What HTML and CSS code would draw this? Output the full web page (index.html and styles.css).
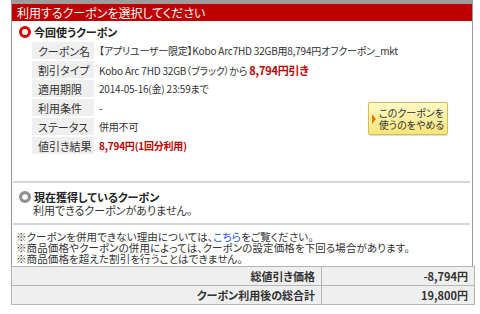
FILE: index.html
```html
<!DOCTYPE html>
<html lang="ja">
<head>
  <meta charset="UTF-8" />
  <title>クーポン選択</title>
  <link rel="stylesheet" href="styles.css">
</head>
<body>
  <div class="coupon-box">
    <div class="box-title">利用するクーポンを選択してください</div>

    <div class="section current">
      <h3 class="section-head"><span class="radio radio-on"></span>今回使うクーポン</h3>
      <div class="current-body">
        <table class="detail">
          <tr><th>クーポン名</th><td>【アプリユーザー限定】Kobo Arc7HD 32GB用8,794円オフクーポン_mkt</td></tr>
          <tr><th>割引タイプ</th><td>Kobo Arc 7HD 32GB（ブラック）から <strong class="red big">8,794円引き</strong></td></tr>
          <tr><th>適用期限</th><td>2014-05-16(金) 23:59まで</td></tr>
          <tr><th>利用条件</th><td>-</td></tr>
          <tr><th>ステータス</th><td>併用不可</td></tr>
          <tr><th>値引き結果</th><td><strong class="red">8,794円(1回分利用)</strong></td></tr>
        </table>
        <a class="btn-cancel" href="#"><span class="arrow"></span><span class="btn-text">このクーポンを<br>使うのをやめる</span></a>
      </div>
    </div>

    <div class="section other">
      <h3 class="section-head"><span class="radio radio-off"></span>現在獲得しているクーポン</h3>
      <p class="empty">利用できるクーポンがありません。</p>
    </div>

    <div class="notes">
      ※クーポンを併用できない理由については、<a href="#">こちら</a>をご覧ください。<br>
      ※商品価格やクーポンの併用によっては、クーポンの設定価格を下回る場合があります。<br>
      ※商品価格を超えた割引を行うことはできません。
    </div>

    <table class="summary">
      <tr><th>総値引き価格</th><td>-8,794円</td></tr>
      <tr><th>クーポン利用後の総合計</th><td>19,800円</td></tr>
    </table>
  </div>
</body>
</html>
```

FILE: styles.css
```css
body {
  margin: 0;
  background: #fff;
  color: #333;
  font-family: "Noto Sans CJK JP", "Liberation Sans", sans-serif;
  font-size: 11px;
  font-feature-settings: "palt";
}
.coupon-box {
  margin-left: 11px;
  width: 460px;
  border: 1px solid #999;
  border-top: 4px solid #a19b9b;
  border-bottom: none;
}
.box-title {
  background: #bf0000;
  color: #fff;
  font-size: 12px;
  height: 17px;
  line-height: 17px;
  padding-left: 5px;
}
.section {
  margin: 0 2px 0 1px;
  border-bottom: 2px solid #d6d6d6;
}
.current {
  padding-bottom: 25px;
}
.section-head {
  margin: 0;
  padding: 3px 0 0 6px;
  font-size: 11px;
  line-height: 16px;
  display: flex;
  align-items: center;
  color: #222;
}
.other .section-head {
  padding-top: 7px;
  line-height: 14px;
}
.radio {
  width: 6px;
  height: 6px;
  border-radius: 50%;
  background: #fff;
  margin-right: 3px;
}
.radio-on {
  border: 3px solid #e00000;
}
.radio-off {
  border: 3px solid #8f8f8f;
  box-shadow: inset 0 0 1px #666;
}
/* table and button share one grid cell; the button sits at the right */
.current-body {
  display: grid;
}
.detail,
.btn-cancel {
  grid-area: 1 / 1;
}
.detail {
  justify-self: start;
  margin-left: 19px;
  border-collapse: separate;
  border-spacing: 0 2px;
  font-size: 10px;
  letter-spacing: -0.2px;
}
.detail th {
  width: 56px;
  height: 17px;
  padding: 0 0 0 6px;
  background: #efefef;
  font-size: 11px;
  letter-spacing: 0;
  font-weight: normal;
  text-align: left;
  white-space: nowrap;
}
.detail td {
  padding: 0 0 0 5px;
  white-space: nowrap;
}
.red {
  color: #c00000;
}
.big {
  font-size: 11px;
}
.btn-cancel {
  justify-self: end;
  align-self: start;
  margin: 62px 22px 0 0;
  width: 78px;
  height: 31px;
  display: flex;
  align-items: center;
  background: linear-gradient(#fffbc8, #f8e57a);
  border: 1px solid #d8bb55;
  border-radius: 2px;
  box-shadow: 0 1px 1px rgba(0, 0, 0, 0.15);
  color: #333;
  text-decoration: none;
  font-size: 10px;
  line-height: 12px;
  white-space: nowrap;
}
.btn-text {
  flex: 1;
  text-align: center;
}
.arrow {
  width: 0;
  height: 0;
  border-left: 4px solid #e57a00;
  border-top: 5px solid transparent;
  border-bottom: 5px solid transparent;
  margin-left: 3px;
}
.empty {
  margin: 0;
  padding: 0 0 6px 20px;
  line-height: 13px;
}
.notes {
  padding: 6px 0 2px 4px;
  line-height: 11px;
  font-size: 10.5px;
  letter-spacing: 0.1px;
}
.notes a {
  color: #2255cc;
  text-decoration: none;
}
.summary {
  margin-left: -1px;
  width: calc(100% + 4px);
  border-collapse: collapse;
  font-weight: bold;
}
.summary th,
.summary td {
  border: 1px solid #b5b5b5;
  background: #efefef;
  height: 18px;
  padding: 0 6px 0 0;
  text-align: right;
}
.summary th {
  width: 303px;
}
```
